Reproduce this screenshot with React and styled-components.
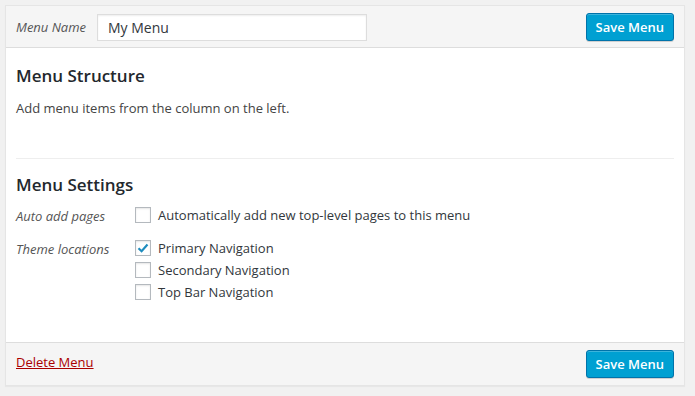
import styled, { createGlobalStyle } from "styled-components";

const GlobalStyle = createGlobalStyle`
  body {
    margin: 0;
    background: #f1f1f1;
    font-family: "Open Sans", "Noto Sans", sans-serif;
    font-size: 13px;
    color: #444;
  }
`;

const Page = styled.div`
  padding: 5px 10px 10px 5px;
`;

const Panel = styled.div`
  border: 1px solid #e5e5e5;
  box-shadow: 0 1px 1px rgba(0, 0, 0, 0.04);
  background: #fff;
`;

const Bar = styled.div`
  display: flex;
  align-items: center;
  justify-content: space-between;
  background: #f5f5f5;
  padding: ${(p) => (p.$footer ? "7px 10px 7px 10px" : "7px 10px 6px 10px")};
  border-top: ${(p) => (p.$footer ? "1px solid #dddddd" : "none")};
  border-bottom: ${(p) => (p.$footer ? "none" : "1px solid #dddddd")};
`;

const NameGroup = styled.label`
  display: flex;
  align-items: center;
`;

const Label = styled.span`
  font-style: italic;
  color: #555;
  width: ${(p) => p.$width || "auto"};
  flex-shrink: 0;
`;

const NameInput = styled.input`
  box-sizing: border-box;
  width: 270px;
  height: 27px;
  margin-left: 11px;
  padding: 3px 10px;
  border: 1px solid #ddd;
  box-shadow: inset 0 1px 2px rgba(0, 0, 0, 0.07);
  font-family: inherit;
  font-size: 14px;
  color: #32373c;
  outline: none;
`;

const Button = styled.button`
  box-sizing: border-box;
  height: 28px;
  padding: 0 9px 1px;
  background: #00a0d2;
  border: 1px solid #0073aa;
  border-radius: 3px;
  box-shadow: inset 0 1px 0 rgba(120, 200, 230, 0.5), 0 1px 0 rgba(0, 0, 0, 0.15);
  color: #fff;
  font-family: inherit;
  font-size: 13px;
  font-weight: 600;
  cursor: pointer;
`;

const Body = styled.div`
  padding: 0 10px;
`;

const Section = styled.div`
  padding: ${(p) => p.$pad};
  border-bottom: ${(p) => (p.$divider ? "1px solid #eeeeee" : "none")};
`;

const Heading = styled.h3`
  margin: 0 0 ${(p) => p.$gap || "10px"};
  font-size: 17px;
  font-weight: 600;
  color: #23282d;
`;

const Text = styled.p`
  margin: 0;
  color: #444;
`;

const Row = styled.div`
  display: flex;
  align-items: flex-start;
  margin-bottom: ${(p) => p.$gap || "0"};
`;

const Options = styled.div`
  display: flex;
  flex-direction: column;
  gap: 6px;
`;

const Option = styled.label`
  display: flex;
  align-items: center;
  gap: 7px;
  color: #32373c;
  line-height: 16px;
`;

const Box = styled.span`
  box-sizing: border-box;
  width: 16px;
  height: 16px;
  border: 1px solid #b4b9be;
  background: #fff;
  box-shadow: inset 0 1px 2px rgba(0, 0, 0, 0.1);
  display: flex;
  align-items: center;
  justify-content: center;
`;

const DeleteLink = styled.a`
  color: #a00;
  text-decoration: underline;
  font-size: 13px;
  margin-bottom: 4px;
`;

function Check({ checked }) {
  return (
    <Box>
      {checked && (
        <svg width="14" height="14" viewBox="0 0 14 14">
          <path d="M2.5 7.2 L5.6 10.2 L11.5 3.6" fill="none" stroke="#1e8cbe" strokeWidth="2.2" />
        </svg>
      )}
    </Box>
  );
}

export default function App() {
  return (
    <Page>
      <GlobalStyle />
      <Panel>
        <Bar>
          <NameGroup>
            <Label>Menu Name</Label>
            <NameInput defaultValue="My Menu" />
          </NameGroup>
          <Button>Save Menu</Button>
        </Bar>
        <Body>
          <Section $pad="16px 0 41px" $divider>
            <Heading $gap="12px">Menu Structure</Heading>
            <Text>Add menu items from the column on the left.</Text>
          </Section>
          <Section $pad="14px 0 42px">
            <Heading $gap="11px">Menu Settings</Heading>
            <Row $gap="15px">
              <Label $width="119px">Auto add pages</Label>
              <Options>
                <Option>
                  <Check />
                  Automatically add new top-level pages to this menu
                </Option>
              </Options>
            </Row>
            <Row>
              <Label $width="119px">Theme locations</Label>
              <Options>
                <Option>
                  <Check checked />
                  Primary Navigation
                </Option>
                <Option>
                  <Check />
                  Secondary Navigation
                </Option>
                <Option>
                  <Check />
                  Top Bar Navigation
                </Option>
              </Options>
            </Row>
          </Section>
        </Body>
        <Bar $footer>
          <DeleteLink href="#">Delete Menu</DeleteLink>
          <Button>Save Menu</Button>
        </Bar>
      </Panel>
    </Page>
  );
}
